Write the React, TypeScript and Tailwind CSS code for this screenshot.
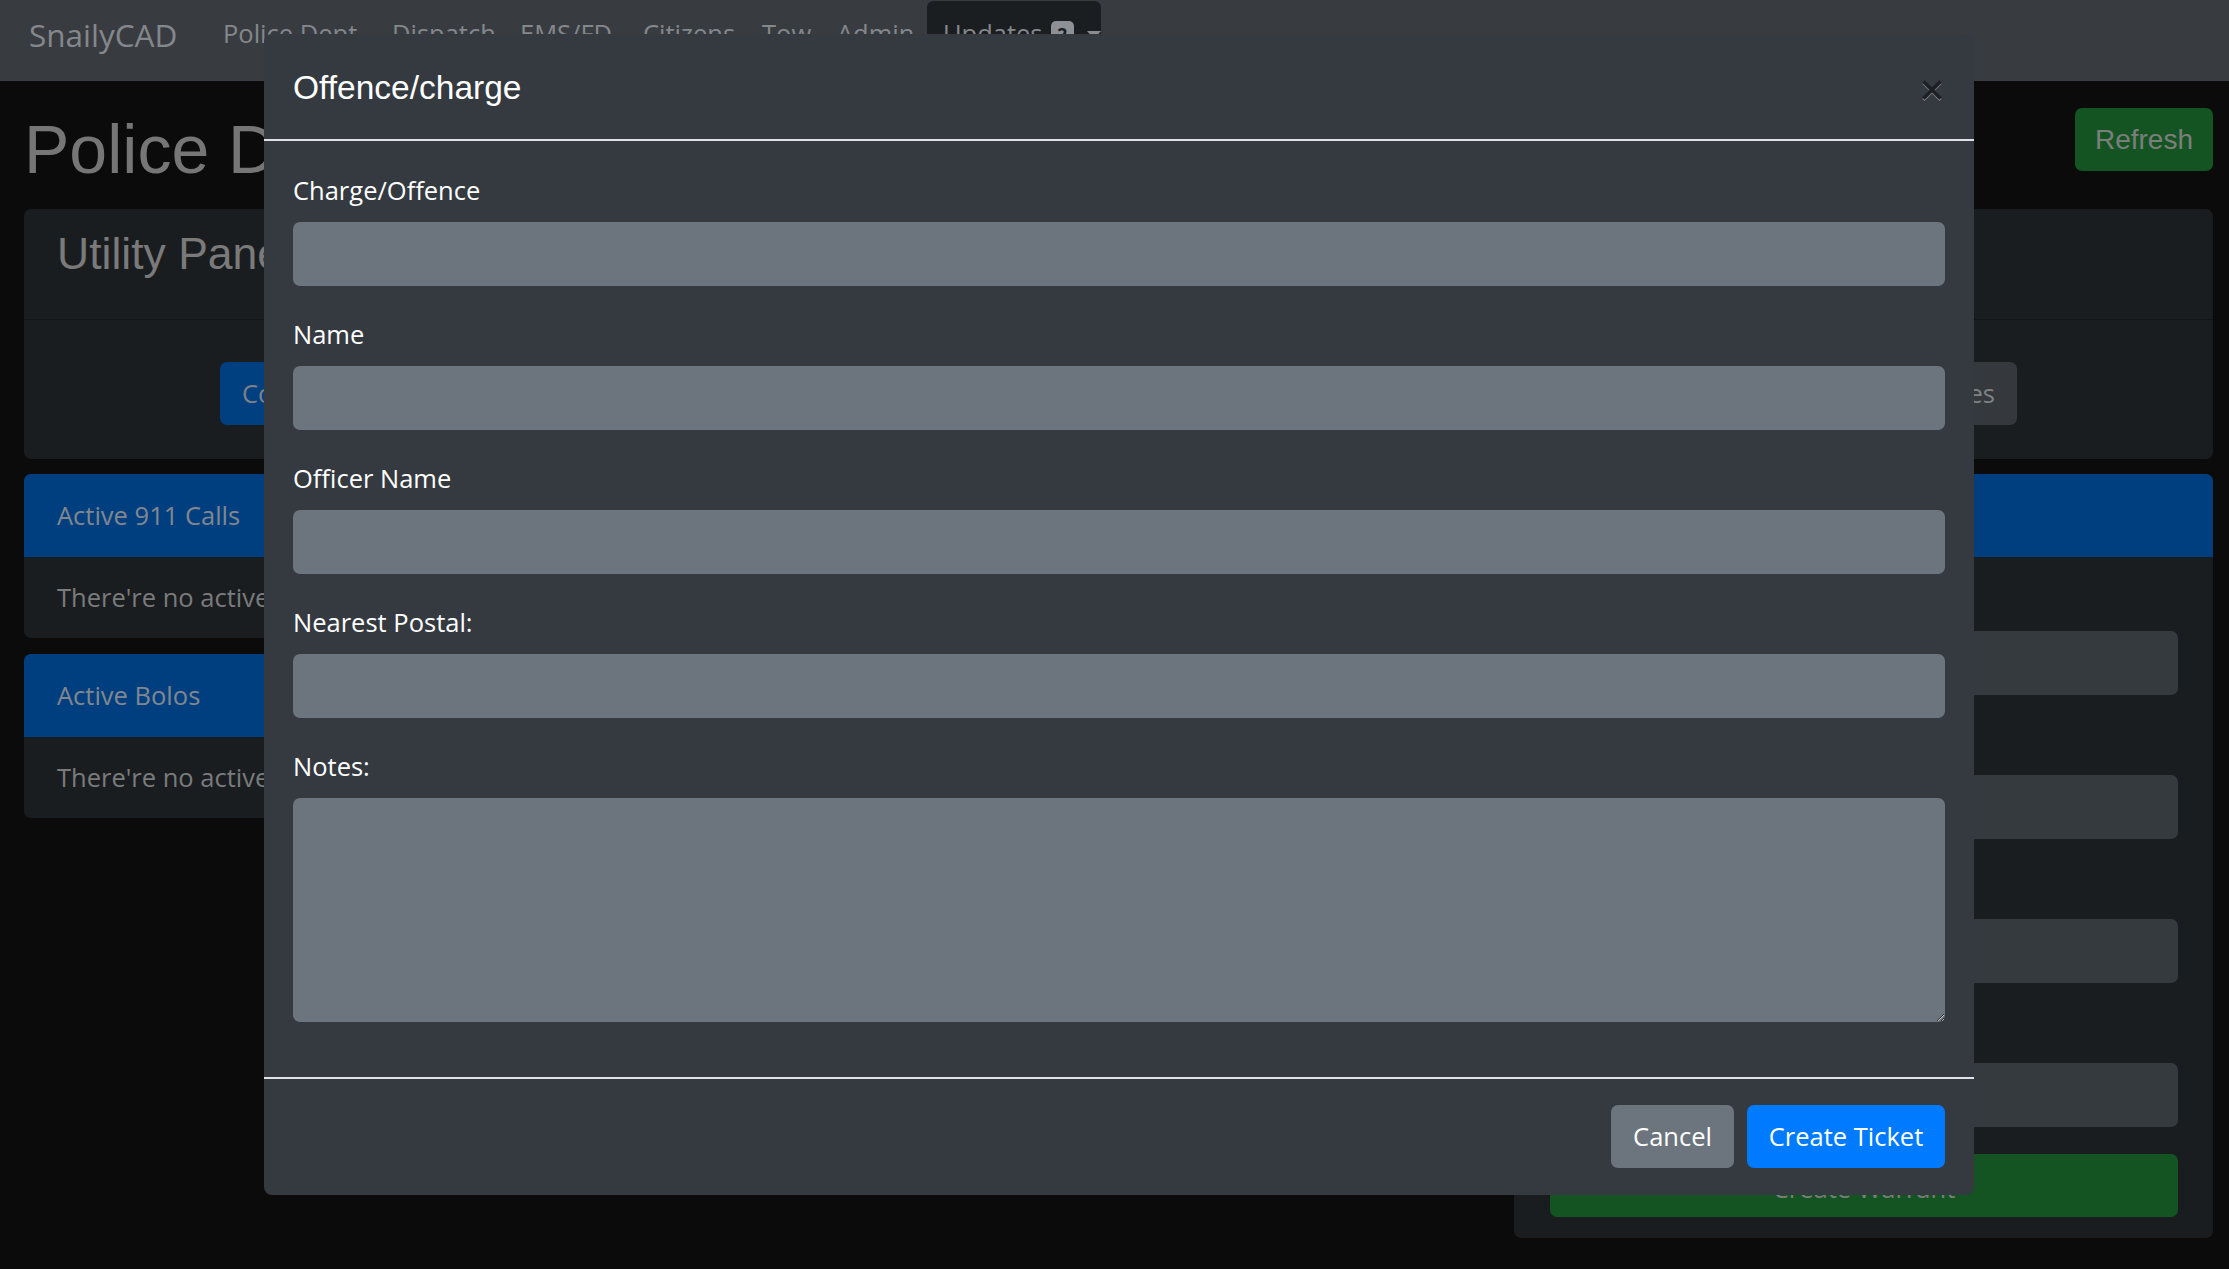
import React from 'react';

const navLinks = [
  { label: 'Police Dept', w: 'w-[169px]' },
  { label: 'Dispatch', w: 'w-[128px]' },
  { label: 'EMS/FD', w: 'w-[123px]' },
  { label: 'Citizens', w: 'w-[119px]' },
  { label: 'Tow', w: 'w-[75px]' },
  { label: 'Admin', w: 'w-[90px]' },
];

const utilityButtons = [
  'Codes 10',
  'Name Search',
  'Plate Search',
  'Create Written Warning',
  'Create Arrest Report',
  'Penal Codes',
];

const modalFields = ['Charge/Offence', 'Name', 'Officer Name', 'Nearest Postal:'];

const warrantFields = ['Full Name', 'Status', 'Details', 'Officer Name'];

function Navbar() {
  return (
    <nav className="flex h-[81px] items-start bg-[#383c41] pl-[29px] text-[#84878b]">
      <a className="mt-[13px] w-[194px] text-[31.5px] leading-[44px]">SnailyCAD</a>
      {navLinks.map((l) => (
        <a key={l.label} className={`${l.w} mt-[13px] leading-[40px]`}>
          {l.label}
        </a>
      ))}
      <div className="mt-[1px] flex h-[70px] w-[174px] items-start rounded-[6px] bg-[#1b1e21] pl-[16px] pt-[12px]">
        <span className="leading-[40px]">Updates</span>
        <span className="ml-[8px] mt-[8px] flex h-[26px] w-[24px] items-center justify-center rounded-[5px] bg-[#8d9094] text-[18px] font-bold text-[#1b1e21]">
          2
        </span>
        <span className="ml-[13px] mt-[18px] h-0 w-0 border-x-[7px] border-t-[8px] border-x-transparent border-t-[#8a8d90]" />
      </div>
    </nav>
  );
}

function CardHeader({ title }: { title: string }) {
  return (
    <div className="flex h-[83px] items-center rounded-t-[7px] bg-[#003f7f] pl-[33px] text-[#80878f]">
      {title}
    </div>
  );
}

function ListCard({ title, empty }: { title: string; empty: string }) {
  return (
    <div className="rounded-[7px] bg-[#1a1d20]">
      <CardHeader title={title} />
      <div className="flex h-[81px] items-center pl-[33px] text-[#7a7b7c]">{empty}</div>
    </div>
  );
}

function CloseIcon() {
  return (
    <svg width="22" height="22" viewBox="0 0 22 22" className="-mr-[1px] mt-[11px]">
      <g stroke="#7d8084" strokeWidth="3" strokeLinecap="butt">
        <line x1="2.5" y1="4" x2="19.5" y2="21" />
        <line x1="19.5" y1="4" x2="2.5" y2="21" />
      </g>
      <g stroke="#1c1f23" strokeWidth="3.4" strokeLinecap="butt">
        <line x1="2.5" y1="2.5" x2="19.5" y2="19.5" />
        <line x1="19.5" y1="2.5" x2="2.5" y2="19.5" />
      </g>
    </svg>
  );
}

function TicketModal() {
  return (
    <div className="absolute inset-0">
      <div className="absolute left-[264px] top-[34px] w-[1710px] rounded-[8px] bg-[#343a40] text-white">
        <div className="flex h-[107px] items-start justify-between border-b-2 border-[#dee2e6] pl-[29px] pr-[32px] pt-[34px]">
          <h5 className="font-['Liberation_Sans',Arial,sans-serif] text-[33.5px] leading-[40px]">Offence/charge</h5>
          <CloseIcon />
        </div>
        <div className="px-[29px] pb-[27px] pt-[29px]">
          {modalFields.map((f) => (
            <div key={f}>
              <label className="mb-[12px] block leading-[40px]">{f}</label>
              <input className="mb-[28px] block h-[64px] w-full rounded-[7px] bg-[#6c757d] px-[20px] text-white outline-none" />
            </div>
          ))}
          <label className="mb-[12px] block leading-[40px]">Notes:</label>
          <textarea className="mb-[28px] block h-[224px] w-full resize-y rounded-[7px] bg-[#6c757d] px-[20px] text-white outline-none" />
        </div>
        <div className="flex justify-end gap-[13px] border-t-2 border-[#dee2e6] pb-[27px] pr-[29px] pt-[26px]">
          <button className="h-[63px] w-[123px] rounded-[7px] bg-[#6c757d] text-white">Cancel</button>
          <button className="h-[63px] w-[198px] rounded-[7px] bg-[#007bff] text-white">Create Ticket</button>
        </div>
      </div>
    </div>
  );
}

export default function App() {
  return (
    <div className="relative min-h-screen bg-[#0b0b0b] font-['Open_Sans',sans-serif] text-[25.5px]">
      <Navbar />
      <main className="pb-[30px] pl-[24px] pr-[16px]">
        <div className="flex items-start justify-between pt-[27px]">
          <h1 className="font-['Liberation_Sans',Arial,sans-serif] text-[68px] leading-[82px] text-[#767676]">
            Police Department
          </h1>
          <button className="h-[63px] w-[138px] rounded-[7px] bg-[#145423] font-['Liberation_Sans',Arial,sans-serif] text-[28px] text-[#7c7e7c]">
            Refresh
          </button>
        </div>

        <div className="mt-[19px] rounded-[7px] bg-[#1a1d20]">
          <div className="h-[111px] border-b border-[#131517] pl-[33px] pt-[18px]">
            <h3 className="font-['Liberation_Sans',Arial,sans-serif] text-[44.5px] leading-[54px] text-[#7a7a7a]">
              Utility Panel
            </h3>
          </div>
          <div className="flex h-[139px] items-start justify-between pl-[196px] pr-[196px] pt-[42px]">
            {utilityButtons.map((b, i) => (
              <button
                key={b}
                className={`h-[63px] shrink-0 whitespace-nowrap rounded-[7px] px-[22px] text-[#7d8286] ${i === 0 ? 'bg-[#003f80]' : 'bg-[#35393d]'}`}
              >
                {b}
              </button>
            ))}
          </div>
        </div>

        <div className="mt-[15px] flex items-start gap-[24px]">
          <div className="flex flex-1 flex-col gap-[16px]">
            <ListCard title="Active 911 Calls" empty="There're no active calls." />
            <ListCard title="Active Bolos" empty="There're no active bolos." />
          </div>
          <div className="w-[699px] rounded-[7px] bg-[#1a1d20]">
            <CardHeader title="Create Warrant" />
            <div className="pb-[21px] pl-[36px] pr-[35px] pt-[22px]">
              {warrantFields.map((f) => (
                <div key={f}>
                  <label className="mb-[12px] block leading-[40px] text-[#7a7b7c]">{f}</label>
                  <input className="mb-[28px] block h-[64px] w-full rounded-[7px] bg-[#353a3f] outline-none" />
                </div>
              ))}
              <button className="-mt-px block h-[63px] w-full rounded-[7px] bg-[#145423] pt-[6px] text-[#7c7e7c]">
                Create Warrant
              </button>
            </div>
          </div>
        </div>
      </main>
      <TicketModal />
    </div>
  );
}
